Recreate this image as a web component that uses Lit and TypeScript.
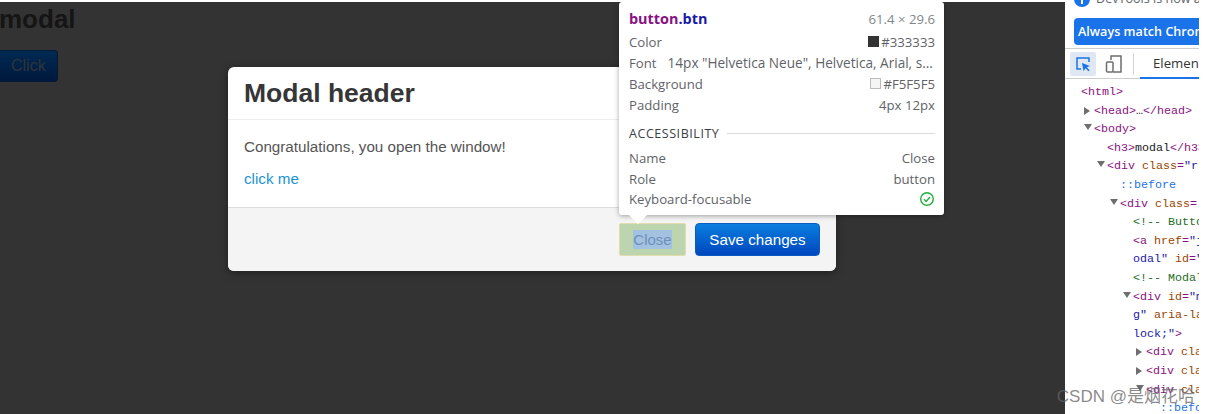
import { LitElement, html, css } from "lit";
import { customElement } from "lit/decorators.js";

@customElement("app-root")
export class AppRoot extends LitElement {
  static styles = css`
    :host { display: block; width: 1209px; height: 414px; overflow: hidden; background: #fff; }
    * { box-sizing: border-box; }
    .page { display: flex; height: 414px; }
    .main {
      position: relative; width: 1065px; flex: none; background: #333; margin-top: 2px;
      font-family: "Liberation Sans", Arial, sans-serif; overflow: hidden;
    }
    h3 { margin: 0; font-size: 26px; line-height: 34px; font-weight: 700; color: #151515; position: relative; left: -1px; }
    .click {
      display: block; width: 58px; height: 32px; margin-top: 14px; border-radius: 0 4px 4px 0;
      background: linear-gradient(#002a52, #00183d); color: #30353a; font-size: 16px; line-height: 29px;
      padding-left: 11px; border: 1px solid #001a38; border-left: 0;
    }
    .modal {
      position: absolute; left: 228px; top: 65px; width: 608px; height: 204px; background: #fff; border-radius: 6px;
      box-shadow: 0 2px 8px rgba(0,0,0,.4); display: flex; flex-direction: column; overflow: hidden; color: #333;
    }
    .mh { height: 53px; border-bottom: 1px solid #eee; padding: 9px 16px 0; flex: none; }
    .mh b { font-size: 26.5px; line-height: 34px; display: block; color: #363636; }
    .mb { height: 88px; padding: 17px 16px 0; flex: none; font-size: 15.2px; line-height: 20px; color: #555; border-bottom: 1px solid #ddd; }
    .mb p { margin: 0 0 12px; }
    .mb a { color: #1b94d3; display: block; }
    .mf { flex: 1; background: #f4f4f4; display: flex; gap: 9px; padding: 15px 16px 0 391px; align-items: flex-start; }
    .close {
      width: 67px; height: 33px; background: #bcd5af; border: 1px solid #e2dcae; border-radius: 2px; display: flex;
      align-items: center; justify-content: center; font-size: 15px; color: #6f90b8;
    }
    .close span { background: #a3c2e2; line-height: 19px; }
    .save {
      width: 125px; height: 33px; border-radius: 4px; background: linear-gradient(#0a7ee0, #0046bd); color: #fff;
      display: flex; align-items: center; justify-content: center; font-size: 15.2px; border: 1px solid #0a5cc4;
    }
    .tip {
      position: absolute; left: 619px; top: 0; width: 325px; height: 213px; background: #fff; border-radius: 3px;
      box-shadow: 0 1px 5px rgba(0,0,0,.35); padding: 7px 9px 0 10px;
      font-family: "Open Sans", "Noto Sans", sans-serif; font-size: 13.2px; color: #5f6368;
    }
    .tip::after {
      content: ""; position: absolute; left: 10px; bottom: -9px; width: 0; height: 0;
      border-left: 9px solid transparent; border-right: 9px solid transparent; border-top: 9px solid #fff;
    }
    .row { display: flex; justify-content: space-between; align-items: center; height: 21px; white-space: nowrap; }
    .row.title { height: 19px; margin-bottom: 3px; }
    .sel { font-weight: 700; font-size: 14.4px; }
    .sel i { font-style: normal; color: #881280; }
    .sel u { text-decoration: none; color: #1a1aa6; }
    .dim { color: #80868b; }
    .val { display: flex; align-items: center; gap: 2px; color: #5f6368; }
    .sw { width: 11px; height: 11px; border: 1px solid #aaa; }
    .sw.d { background: #333; border-color: #333; }
    .sw.l { background: #f5f5f5; border-color: #bbb; }
    .font { justify-content: flex-start; gap: 11px; }
    .font span + span { font-size: 13.6px; }
    .acc { display: flex; align-items: center; gap: 8px; height: 20px; margin: 8px 0 5px; font-size: 12.5px; letter-spacing: .55px; color: #3c4043; }
    .acc::after { content: ""; flex: 1; height: 1px; background: #dadce0; }
    .tip .row.a { height: 20.5px; }
    .dev { flex: 1; min-width: 0; display: flex; font-family: "Open Sans", "Noto Sans", sans-serif; overflow: hidden; }
    .devin { width: 134px; flex: none; overflow: hidden; }
    .info { height: 16px; margin-top: -9px; padding-left: 9px; display: flex; gap: 6px; white-space: nowrap; font-size: 12.6px; color: #5f6368; align-items: flex-end; }
    .info i { flex: none; width: 16px; height: 16px; border-radius: 50%; background: #1a73e8; position: relative; }
    .info i::after { content: ""; position: absolute; left: 7px; top: 7px; width: 2px; height: 6px; background: #fff; }
    .info span { line-height: 16px; }
    .match {
      margin: 11px 0 0 9px; height: 27px; background: #1a73e8; color: #fff; font-weight: 600; font-size: 12.6px; line-height: 27px;
      padding-left: 4px; border-radius: 4px 0 0 4px; white-space: nowrap; overflow: hidden;
    }
    .tools { margin-top: 3px; height: 31px; border-top: 1px solid #cbcdd1; border-bottom: 1px solid #cbcdd1; display: flex; align-items: center; padding-left: 5px; background: #fff; }
    .ic { width: 26px; height: 24px; display: flex; align-items: center; justify-content: center; border-radius: 2px; }
    .ic.on { background: #dfe7f3; }
    .ic + .ic { margin-left: 5px; }
    .sep { width: 1px; height: 22px; background: #d0d2d5; margin: 0 6px 0 6px; }
    .tab { flex: 1; height: 30px; font-size: 13.2px; color: #333; line-height: 28px; padding-left: 13px; border-bottom: 2px solid #1a73e8; white-space: nowrap; overflow: hidden; }
    .tree { padding-top: 4px; font-family: "Liberation Mono", monospace; font-size: 11.67px; line-height: 18.6px; }
    .ln { height: 18.6px; position: relative; white-space: pre; }
    .arr { position: absolute; top: 5px; width: 0; height: 0; }
    .arr.r { border-left: 6px solid #6e6e6e; border-top: 4px solid transparent; border-bottom: 4px solid transparent; }
    .arr.d { border-top: 6px solid #6e6e6e; border-left: 4px solid transparent; border-right: 4px solid transparent; top: 4px; }
    .t { color: #881280; } .k { color: #994500; } .v { color: #1a1aa6; } .c { color: #236e25; } .p { color: #1a73e8; } .x { color: #222; }
    .wm {
      position: absolute; right: 14px; bottom: 7px; font-family: "Liberation Sans", "Noto Sans CJK SC", sans-serif; font-size: 17px;
      color: rgba(100,100,100,.75); white-space: nowrap; z-index: 3; line-height: 20px;
    }
    .wrap { position: relative; }
  `;

  private line(indent: number, content: unknown, arrow?: "r" | "d") {
    return html`<div class="ln" style="padding-left:${indent}px">${arrow ? html`<span class="arr ${arrow}" style="left:${indent - 10}px"></span>` : ""}${content}</div>`;
  }

  render() {
    return html`<div class="wrap"><div class="page">
      <div class="main">
        <h3>modal</h3>
        <div class="click">Click</div>
        <div class="modal">
          <div class="mh"><b>Modal header</b></div>
          <div class="mb"><p>Congratulations, you open the window!</p><a>click me</a></div>
          <div class="mf">
            <div class="close"><span>Close</span></div>
            <div class="save">Save changes</div>
          </div>
        </div>
        <div class="tip">
          <div class="row title"><span class="sel"><i>button</i><u>.btn</u></span><span class="dim">61.4 × 29.6</span></div>
          <div class="row"><span>Color</span><span class="val"><span class="sw d"></span>#333333</span></div>
          <div class="row font"><span>Font</span><span>14px "Helvetica Neue", Helvetica, Arial, s…</span></div>
          <div class="row"><span>Background</span><span class="val"><span class="sw l"></span>#F5F5F5</span></div>
          <div class="row"><span>Padding</span><span>4px 12px</span></div>
          <div class="acc">ACCESSIBILITY</div>
          <div class="row a"><span>Name</span><span>Close</span></div>
          <div class="row a"><span>Role</span><span>button</span></div>
          <div class="row a"><span>Keyboard-focusable</span>
            <svg width="16" height="16" viewBox="0 0 16 16" fill="none" stroke="#22b03c" stroke-width="1.4"><circle cx="8" cy="8" r="6.3"/><path d="M5 8.2l2.2 2.2L11 6"/></svg>
          </div>
        </div>
      </div>
      <div class="dev"><div class="devin">
        <div class="info"><i></i><span>DevTools is now a</span></div>
        <div class="match">Always match Chrome</div>
        <div class="tools">
          <div class="ic on"><svg width="18" height="18" viewBox="0 0 18 18" fill="none">
            <path d="M7 14H3V3h12v4" stroke="#1a73e8" stroke-width="1.5"/><path d="M8 8l8 3-3.2 1.2 2.8 3-1.2 1-2.8-3L9.500 16z" fill="#1a73e8"/></svg></div>
          <div class="ic"><svg width="20" height="20" viewBox="0 0 20 20" fill="none" stroke="#6e6e6e" stroke-width="1.5">
            <path d="M7 6V2h10v16H9"/><rect x="2.500" y="8" width="6.500" height="10" rx="1"/></svg></div>
          <div class="sep"></div>
          <div class="tab">Elements</div>
        </div>
        <div class="tree">
          ${this.line(16, html`<span class="t">&lt;html&gt;</span>`)}
          ${this.line(29, html`<span class="t">&lt;head&gt;</span><span class="x">…</span><span class="t">&lt;/head&gt;</span>`, "r")}
          ${this.line(29, html`<span class="t">&lt;body&gt;</span>`, "d")}
          ${this.line(42, html`<span class="t">&lt;h3&gt;</span><span class="x">modal</span><span class="t">&lt;/h3&gt;</span>`)}
          ${this.line(42, html`<span class="t">&lt;div </span><span class="k">class</span><span class="t">=</span><span class="v">"r</span>`, "d")}
          ${this.line(55, html`<span class="p">::before</span>`)}
          ${this.line(55, html`<span class="t">&lt;div </span><span class="k">class</span><span class="t">=</span>`, "d")}
          ${this.line(68, html`<span class="c">&lt;!-- Butto</span>`)}
          ${this.line(68, html`<span class="t">&lt;a </span><span class="k">href</span><span class="t">=</span><span class="v">"j</span>`)}
          ${this.line(68, html`<span class="v">odal"</span> <span class="k">id</span><span class="t">=</span><span class="v">"</span>`)}
          ${this.line(68, html`<span class="c">&lt;!-- Modal</span>`)}
          ${this.line(68, html`<span class="t">&lt;div </span><span class="k">id</span><span class="t">=</span><span class="v">"m</span>`, "d")}
          ${this.line(68, html`<span class="v">g"</span> <span class="k">aria-la</span>`)}
          ${this.line(68, html`<span class="v">lock;"</span><span class="t">&gt;</span>`)}
          ${this.line(81, html`<span class="t">&lt;div </span><span class="k">cla</span>`, "r")}
          ${this.line(81, html`<span class="t">&lt;div </span><span class="k">cla</span>`, "r")}
          ${this.line(81, html`<span class="t">&lt;div </span><span class="k">cla</span>`, "d")}
          ${this.line(95, html`<span class="p">::befo</span>`)}
        </div>
      </div></div>
    </div><div class="wm">CSDN @是烟花哈</div></div>`;
  }
}
